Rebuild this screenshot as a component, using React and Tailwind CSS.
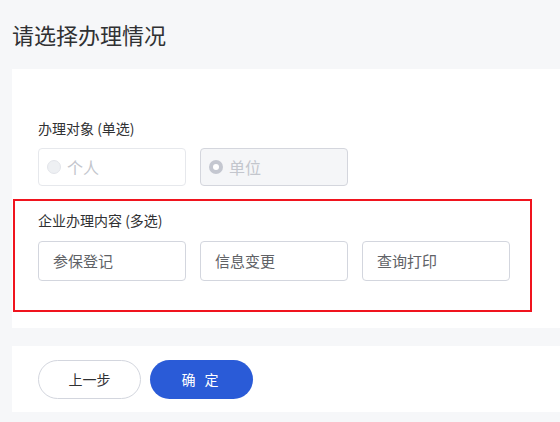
import React, { useState } from "react";

const FONT = { fontFamily: '"Noto Sans CJK SC", "Noto Sans", sans-serif' };

const Radio = ({ label, checked }) => (
  <div className={`w-[148px] h-[38px] rounded border flex items-center pl-[8px] gap-[6px] ${checked ? "bg-[#f5f6f8] border-[#d4d6dd]" : "bg-white border-[#e6e8ec]"}`}>
    {checked ? (
      <span className="w-[14px] h-[14px] rounded-full bg-[#c4c7d0] flex items-center justify-center">
        <span className="w-[6px] h-[6px] rounded-full bg-white" />
      </span>
    ) : (
      <span className="w-[14px] h-[14px] rounded-full bg-[#eef0f3] border border-[#e3e5ea]" />
    )}
    <span className="text-[16px] text-[#c3c6cd]">{label}</span>
  </div>
);

const Check = ({ label, active, onClick }) => (
  <button
    onClick={onClick}
    className={`w-[148px] h-[40px] rounded border flex items-center px-[14px] text-[15px] text-left ${active ? "border-[#2a5bd7] text-[#2a5bd7]" : "border-[#d3d6de] text-[#606266]"}`}
  >
    {label}
  </button>
);

export default function App() {
  const [picked, setPicked] = useState([]);
  const toggle = (k) => setPicked((p) => (p.includes(k) ? p.filter((x) => x !== k) : [...p, k]));

  return (
    <div className="min-h-screen bg-[#f6f7f9] text-[#303133]" style={FONT}>
      {/* title */}
      <div className="h-[69px] flex items-center pl-3 pb-[1px]">
        <h1 className="text-[22px] leading-none text-[#303133]">请选择办理情况</h1>
      </div>

      {/* main card */}
      <div className="ml-3 bg-white pt-[49px] pb-[16px]">
        <div className="px-[26px]">
          <p className="text-[14px] leading-5">办理对象 (单选)</p>
          <div className="flex gap-[14px] mt-[10px]">
            <Radio label="个人" />
            <Radio label="单位" checked />
          </div>
        </div>

        <div className="mt-[13px] ml-px w-[519px] h-[113px] border-2 border-[#f0141e] pl-[23px] pt-[9px]">
          <p className="text-[14px] leading-5">企业办理内容 (多选)</p>
          <div className="flex gap-[14px] mt-[11px]">
            <Check label="参保登记" active={picked.includes(1)} onClick={() => toggle(1)} />
            <Check label="信息变更" active={picked.includes(2)} onClick={() => toggle(2)} />
            <Check label="查询打印" active={picked.includes(3)} onClick={() => toggle(3)} />
          </div>
        </div>
      </div>

      {/* footer card */}
      <div className="ml-3 mt-[18px] bg-white h-[66px] flex items-center gap-[9px] px-[26px]">
        <button className="w-[103px] h-[39px] rounded-full border border-[#d3d6de] bg-white text-[14px] text-[#303133]">
          上一步
        </button>
        <button className="w-[103px] h-[39px] rounded-full bg-[#2a5bd7] text-[14px] text-white tracking-[3px]">
          确 定
        </button>
      </div>
    </div>
  );
}
